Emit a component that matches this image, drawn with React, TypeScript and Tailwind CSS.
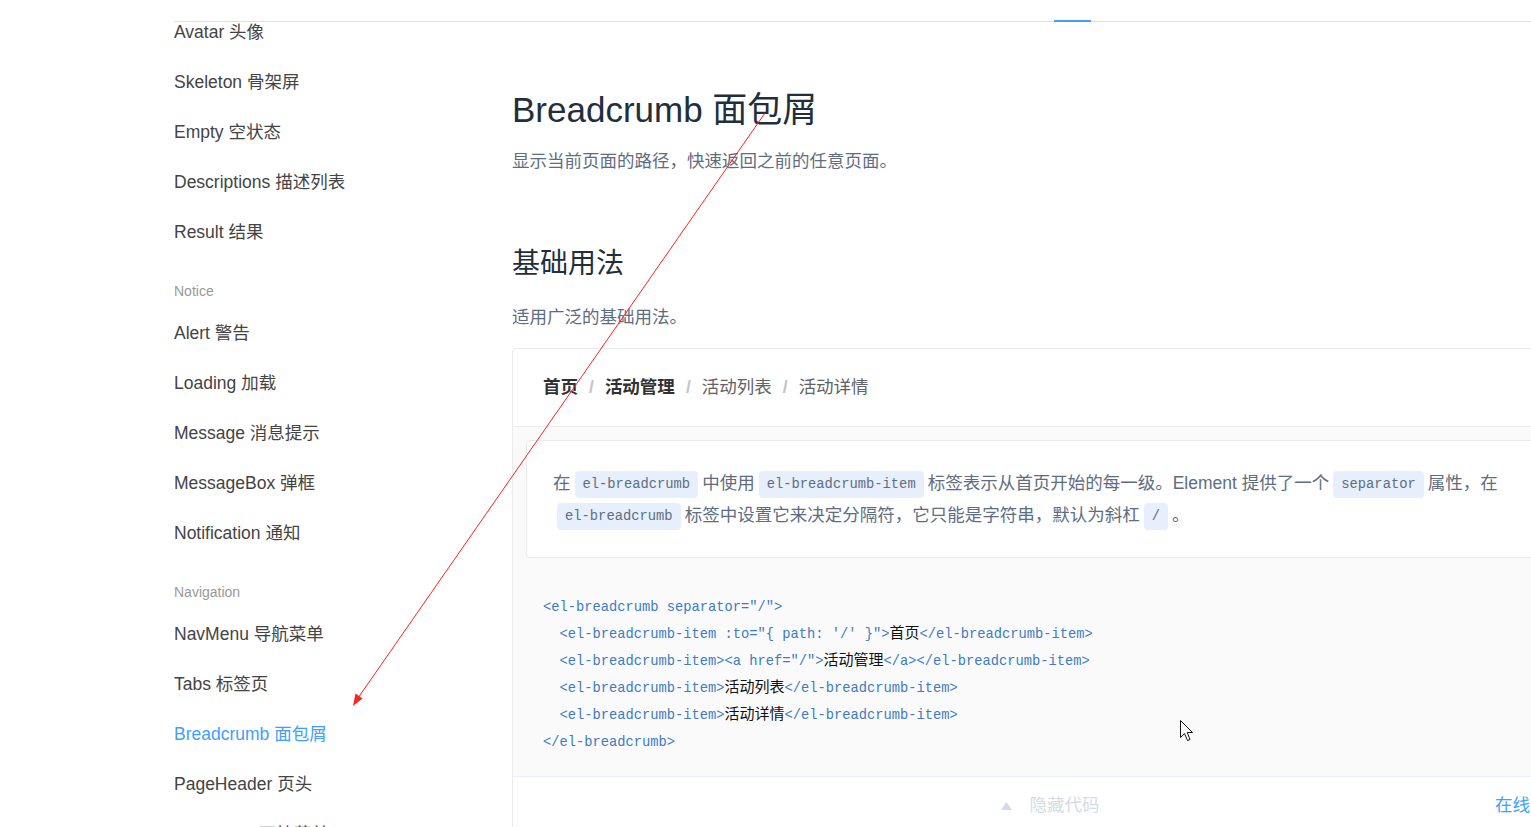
const sans = "font-['Liberation_Sans','Noto_Sans_CJK_SC',sans-serif]";
const mono = "font-['Liberation_Mono','Noto_Sans_CJK_SC',monospace]";

type NavGroup = { title?: string; items: string[] };

const groups: NavGroup[] = [
  { items: ["Avatar 头像", "Skeleton 骨架屏", "Empty 空状态", "Descriptions 描述列表", "Result 结果"] },
  { title: "Notice", items: ["Alert 警告", "Loading 加载", "Message 消息提示", "MessageBox 弹框", "Notification 通知"] },
  { title: "Navigation", items: ["NavMenu 导航菜单", "Tabs 标签页", "Breadcrumb 面包屑", "PageHeader 页头", "Dropdown 下拉菜单"] },
];

const crumbs = [
  { label: "首页", bold: true },
  { label: "活动管理", bold: true },
  { label: "活动列表", bold: false },
  { label: "活动详情", bold: false },
];

function Chip({ children }: { children: string }) {
  return (
    <span className={`${mono} mx-[4px] inline-block h-[27px] rounded-[4px] bg-[#e6effb] px-[8px] align-middle text-[13.8px] leading-[27px] text-[#5e6d82]`}>
      {children}
    </span>
  );
}

// blue code fragment, black CJK text
const B = ({ children }: { children: string }) => <span className="text-[#3d7bc4]">{children}</span>;
const Z = ({ children }: { children: string }) => (
  <span className="font-['Noto_Sans_CJK_SC',sans-serif] text-[15px] leading-none text-[#111]">{children}</span>
);

function CodeLine({ children }: { children: React.ReactNode }) {
  return <div className="h-[27px] leading-[27px]">{children}</div>;
}

export default function App() {
  return (
    <div className={`${sans} relative h-[827px] w-[1531px] overflow-hidden bg-white`}>
      {/* top bar */}
      <header className="ml-[174px] flex h-[22px] items-end border-b border-[#dcdfe6]">
        <div className="-mb-px ml-[880px] h-[2px] w-[37px] bg-[#409eff]" />
      </header>

      <div className="flex">
        {/* side nav */}
        <aside className="h-[805px] w-[512px] shrink-0 overflow-hidden pl-[174px]">
          <div className="-mt-[15px]">
            {groups.map((g, gi) => (
              <div key={gi}>
                {g.title && (
                  <div className="pt-[25px] pb-[8px] text-[14px] leading-[18px] text-[#999]">{g.title}</div>
                )}
                {g.items.map((it) => (
                  <div
                    key={it}
                    className={`h-[50px] text-[17.5px] leading-[50px] ${it.startsWith("Breadcrumb") ? "text-[#409eff]" : "text-[#444]"}`}
                  >
                    {it}
                  </div>
                ))}
              </div>
            ))}
          </div>
        </aside>

        {/* page content */}
        <main className="w-[1076px] shrink-0">
          <h1 className="mt-[68px] h-[40px] text-[35px] font-normal leading-[40px] text-[#1f2f3d]">Breadcrumb 面包屑</h1>
          <p className="mt-[19px] text-[17.5px] leading-[24px] text-[#5e6d82]">显示当前页面的路径，快速返回之前的任意页面。</p>

          <h2 className="mt-[71px] text-[28px] font-normal leading-[40px] text-[#1f2f3d]">基础用法</h2>
          <p className="mt-[21px] text-[17.5px] leading-[24px] text-[#5e6d82]">适用广泛的基础用法。</p>

          <div className="mt-[19px] rounded-[4px] border border-[#ebebeb]">
            {/* demo */}
            <div className="flex h-[78px] items-start border-b border-[#ebebeb] pt-[23px] pl-[30px]">
              {crumbs.map((c, i) => (
                <div key={c.label} className="flex h-[30px] items-center text-[17.5px]">
                  <span className={c.bold ? "font-bold text-[#303133]" : "text-[#606266]"}>{c.label}</span>
                  {i < crumbs.length - 1 && <span className="mx-[11px] font-bold text-[#c0c4cc]">/</span>}
                </div>
              ))}
            </div>

            {/* meta */}
            <div className="bg-[#fafafa]">
              <div className="px-[13px] pt-[13px]">
                <div className="rounded-[4px] border border-[#ebebeb] bg-white pt-[26px] pb-[26px] pl-[26px] text-[17.5px] leading-[32px] text-[#5e6d82]">
                  在<Chip>el-breadcrumb</Chip>中使用<Chip>el-breadcrumb-item</Chip>标签表示从首页开始的每一级。Element 提供了一个<Chip>separator</Chip>属性，在
                  <br />
                  <Chip>el-breadcrumb</Chip>标签中设置它来决定分隔符，它只能是字符串，默认为斜杠<Chip>/</Chip>。
                </div>
              </div>
              <div className={`${mono} pt-[36px] pb-[20px] pl-[30px] text-[13.75px] whitespace-pre`}>
                <CodeLine><B>{'<el-breadcrumb separator="/">'}</B></CodeLine>
                <CodeLine><B>{"  <el-breadcrumb-item :to=\"{ path: '/' }\">"}</B><Z>首页</Z><B>{"</el-breadcrumb-item>"}</B></CodeLine>
                <CodeLine><B>{'  <el-breadcrumb-item><a href="/">'}</B><Z>活动管理</Z><B>{"</a></el-breadcrumb-item>"}</B></CodeLine>
                <CodeLine><B>{"  <el-breadcrumb-item>"}</B><Z>活动列表</Z><B>{"</el-breadcrumb-item>"}</B></CodeLine>
                <CodeLine><B>{"  <el-breadcrumb-item>"}</B><Z>活动详情</Z><B>{"</el-breadcrumb-item>"}</B></CodeLine>
                <CodeLine><B>{"</el-breadcrumb>"}</B></CodeLine>
              </div>
            </div>

            {/* control bar */}
            <div className="flex h-[58px] items-center border-t border-[#eaeefb] text-[17.5px]">
              <div className="flex-1" />
              <div className="flex items-center gap-[18px] text-[#d3dce6]">
                <svg width="11" height="8" viewBox="0 0 11 8">
                  <path d="M5.5 0L11 8H0z" fill="#d3dce6" />
                </svg>
                <span>隐藏代码</span>
              </div>
              <div className="flex flex-1 justify-end text-[#409eff]">
                <span className="mr-[22px]">在线运行</span>
              </div>
            </div>
          </div>
        </main>
      </div>

      {/* annotation arrow + mouse pointer */}
      <svg className="pointer-events-none absolute inset-0" width="1531" height="827">
        <line x1="765" y1="113" x2="358" y2="698" stroke="#ff2020" strokeWidth="1" />
        <path d="M353 706L355.5 693.5L362.5 698.5z" fill="#ff2020" />
        <path
          d="M1180.5 720.5V737.5L1184.5 733.5L1187.5 740.5L1190 739.5L1187.2 732.5H1192.5z"
          fill="#fff"
          stroke="#111"
          strokeWidth="1"
          strokeLinejoin="round"
        />
      </svg>
    </div>
  );
}
